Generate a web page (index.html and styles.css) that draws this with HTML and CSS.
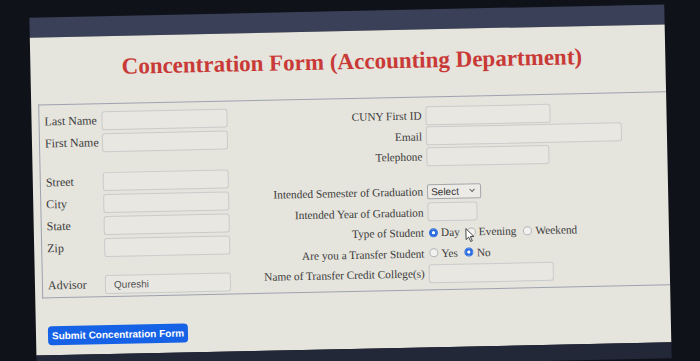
FILE: index.html
```html
<!DOCTYPE html>
<html lang="en">
<head>
  <meta charset="UTF-8" />
  <meta name="viewport" content="width=device-width, initial-scale=1.0"/>
  <title>Concentration Form</title>
  <link rel="stylesheet" href="styles.css">
</head>
<body>

<div class="screen">
  <div class="topbar"></div>

  <div class="page">
    <h1>Concentration Form (Accounting Department)</h1>

    <div class="form-box">
      <div class="col-left">
        <div class="row"><label>Last Name</label><input type="text" class="txt"></div>
        <div class="row"><label>First Name</label><input type="text" class="txt"></div>
        <div class="spacer-a"></div>
        <div class="row"><label>Street</label><input type="text" class="txt"></div>
        <div class="row"><label>City</label><input type="text" class="txt"></div>
        <div class="row"><label>State</label><input type="text" class="txt"></div>
        <div class="row"><label>Zip</label><input type="text" class="txt"></div>
        <div class="spacer-b"></div>
        <div class="row"><label>Advisor</label><input type="text" class="txt advisor" value="Qureshi"></div>
      </div>

      <div class="col-right">
        <div class="row"><label>CUNY First ID</label><input type="text" class="txt"></div>
        <div class="row"><label>Email</label><input type="text" class="txt wide"></div>
        <div class="row"><label>Telephone</label><input type="text" class="txt tel"></div>
        <div class="spacer-c"></div>
        <div class="row">
          <label>Intended Semester of Graduation</label>
          <span class="select">Select
            <svg width="8" height="6" viewBox="0 0 8 6"><path d="M1.5 1.5 L4 4 L6.5 1.5" fill="none" stroke="#666" stroke-width="1"/></svg>
          </span>
        </div>
        <div class="row"><label>Intended Year of Graduation</label><input type="text" class="txt year"></div>
        <div class="row">
          <label>Type of Student</label>
          <span class="opt"><span class="radio on"></span>Day</span>
          <span class="opt"><span class="radio"></span>Evening
            <svg class="cursor" width="10" height="15" viewBox="0 0 10 15"><path d="M1 1 L1 12 L3.6 9.6 L5.6 14 L7.2 13.3 L5.3 9 L8.8 9 Z" fill="#fff" stroke="#333" stroke-width="0.9"/></svg>
          </span>
          <span class="opt"><span class="radio"></span>Weekend</span>
        </div>
        <div class="row">
          <label>Are you a Transfer Student</label>
          <span class="opt"><span class="radio"></span>Yes</span>
          <span class="opt"><span class="radio on"></span>No</span>
        </div>
        <div class="row"><label>Name of Transfer Credit College(s)</label><input type="text" class="txt"></div>
      </div>
    </div>

    <button class="submit">Submit Concentration Form</button>
  </div>

  <div class="bottombar"></div>
</div>

</body>
</html>
```

FILE: styles.css
```css
* { box-sizing: border-box; }

html, body {
  margin: 0;
  height: 100%;
  overflow: hidden;
}

body {
  background-color: #10121a;
  font-family: "Liberation Serif", "Times New Roman", serif;
}

.screen {
  width: 635px;
  margin: 11px 0 0 33px;
  transform: rotate(-1.2deg);
}

.topbar {
  height: 20px;
  background: #3a4058;
}

.page {
  height: 318px;
  background: #e5e4dd;
  padding-top: 17px;
}

.bottombar {
  height: 16px;
  background: #232839;
}

h1 {
  margin: 0 0 0 8px;
  text-align: center;
  font-size: 23px;
  line-height: 28px;
  color: #c93a37;
  font-weight: bold;
}

.form-box {
  display: flex;
  margin: 22px 0 0 7px;
  border: 1.5px solid #9ea2b0;
  border-right: none;
  padding: 5px 0 1px 5px;
}

.col-left {
  width: 188px;
}

.col-left .row {
  display: flex;
  align-items: center;
  height: 22px;
}

.col-left label {
  width: 57px;
  font-size: 12px;
  color: #3b3b3b;
}

.spacer-a { height: 17px; }
.spacer-b { height: 15px; }
.spacer-c { height: 14.5px; }

.col-right {
  padding-top: 3px;
  margin-left: 21px;
}

.col-right .row {
  display: flex;
  align-items: center;
  height: 20.5px;
}

.col-right label {
  width: 168px;
  text-align: right;
  font-size: 11.3px;
  color: #3b3b3b;
  margin-right: 4px;
}

.txt {
  width: 126px;
  height: 19px;
  border: 1px solid #cacbcb;
  border-radius: 3px;
  background: #e8e7e2;
  padding: 0 8px;
  font-family: "Liberation Sans", Arial, sans-serif;
  font-size: 10px;
  color: #555;
}

.col-right .txt { width: 125px; }
.col-right .txt.wide { width: 196px; }
.col-right .txt.tel { width: 123px; }
.col-right .txt.year { width: 50px; }

.select {
  display: flex;
  align-items: center;
  justify-content: space-between;
  width: 54px;
  height: 15px;
  border: 1px solid #a5a7ab;
  border-radius: 2px;
  background: #ecebe7;
  padding: 0 4px 0 3px;
  font-family: "Liberation Sans", Arial, sans-serif;
  font-size: 10px;
  color: #333;
}

.opt {
  display: flex;
  align-items: center;
  font-size: 11.3px;
  color: #3b3b3b;
  margin-right: 6px;
  position: relative;
}

.radio {
  width: 9px;
  height: 9px;
  border-radius: 50%;
  border: 1px solid #b4b6ba;
  background: #f1f1ee;
  margin: 0 3px 0 1px;
}

.radio.on {
  border-color: #2f6fe0;
  background: radial-gradient(circle, #fff 0 1.3px, #2f6fe0 1.8px);
}

.cursor {
  position: absolute;
  left: -1px;
  top: 2px;
}

.submit {
  display: block;
  margin: 28px 0 0 12px;
  width: 140px;
  height: 19px;
  border: none;
  border-radius: 4px;
  background: #1662e6;
  color: #fff;
  font-family: "Liberation Sans", Arial, sans-serif;
  font-size: 10px;
  font-weight: bold;
  padding: 0;
}
```
